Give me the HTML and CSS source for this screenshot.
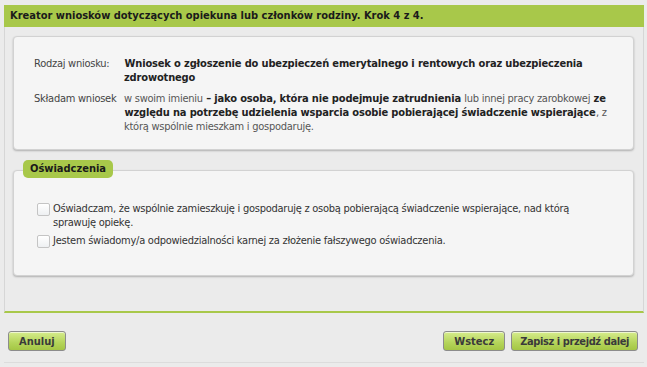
FILE: index.html
```html
<!DOCTYPE html>
<html>
<head>
  <meta charset="utf-8">
  <title>Kreator wniosków</title>
  <link rel="stylesheet" href="styles.css">
</head>
<body>
  <div class="wizard">
    <div class="wizard-header">Kreator wniosków dotyczących opiekuna lub członków rodziny. Krok 4 z 4.</div>

    <div class="wizard-body">
      <div class="card summary">
        <div class="summary-label">Rodzaj wniosku:</div>
        <div class="summary-value"><b>Wniosek o zgłoszenie do ubezpieczeń emerytalnego i rentowych oraz ubezpieczenia zdrowotnego</b></div>

        <div class="summary-label">Składam wniosek</div>
        <div class="summary-value">w swoim imieniu <b>– jako osoba, która nie podejmuje zatrudnienia</b> lub innej pracy zarobkowej <b>ze</b> <b>względu na potrzebę udzielenia wsparcia osobie pobierającej świadczenie wspierające</b>, z <span>którą wspólnie mieszkam i gospodaruję.</span></div>
      </div>

      <div class="section">
        <div class="section-title">Oświadczenia</div>
        <div class="card statements">
          <label class="check-row">
            <input type="checkbox">
            <span>Oświadczam, że wspólnie zamieszkuję i gospodaruję z osobą pobierającą świadczenie wspierające, nad którą sprawuję opiekę.</span>
          </label>
          <label class="check-row">
            <input type="checkbox">
            <span>Jestem świadomy/a odpowiedzialności karnej za złożenie fałszywego oświadczenia.</span>
          </label>
        </div>
      </div>
    </div>

    <div class="wizard-buttons">
      <button class="btn">Anuluj</button>
      <div class="btn-group">
        <button class="btn">Wstecz</button>
        <button class="btn btn-wide">Zapisz i przejdź dalej</button>
      </div>
    </div>
  </div>
</body>
</html>
```

FILE: styles.css
```css
body {
  margin: 0;
  background-color: #ebebeb;
  font-family: Tahoma, "DejaVu Sans Condensed", "DejaVu Sans", sans-serif;
  font-size: 11px;
  letter-spacing: -0.25px;
  color: #3a3a3a;
}

.wizard {
  margin: 5px 3px 0 4px;
  border-bottom: 1px solid #dcdcdc;
  height: 358px;
  box-sizing: border-box;
}

.wizard-header {
  height: 22px;
  line-height: 22px;
  padding-left: 6px;
  background-color: #a8c84a;
  color: #1a1a1a;
  font-weight: bold;
  font-size: 11px;
  letter-spacing: 0;
}

.wizard-body {
  border-left: 1px solid #d6d6d6;
  border-right: 1px solid #d6d6d6;
  border-bottom: 2px solid #a8c84a;
  padding: 9px 9px 35px 8px;
}

.card {
  background-color: #f5f5f5;
  border: 1px solid #d2d2d2;
  border-radius: 4px;
  box-shadow: 0 1px 2px rgba(0, 0, 0, 0.25);
}

/* Summary */
.summary {
  display: grid;
  grid-template-columns: 90px 1fr;
  row-gap: 7px;
  padding: 20px 22px 22px 20px;
  line-height: 14px;
  height: 114px;
  box-sizing: border-box;
  align-content: start;
}

.summary-label {
  color: #444;
}

.summary-value {
  color: #555;
}

.summary-value b {
  color: #222;
  letter-spacing: -0.15px;
  margin: 0 0.5px;
}

/* Statements */
.section {
  margin-top: 10px;
}

.section-title {
  position: relative;
  z-index: 1;
  width: fit-content;
  margin-left: 10px;
  margin-bottom: -8px;
  height: 18px;
  line-height: 18px;
  padding: 0 7px;
  background-color: #a8c84a;
  border-radius: 5px;
  font-weight: bold;
  font-size: 11px;
  letter-spacing: 0;
  color: #1a1a1a;
}

.statements {
  display: flex;
  flex-direction: column;
  gap: 4px;
  padding: 31px 40px 28px 23px;
  height: 106px;
  box-sizing: border-box;
  line-height: 14px;
}

.check-row {
  display: flex;
  align-items: flex-start;
  gap: 3px;
  color: #333;
}

.check-row input {
  appearance: none;
  flex: none;
  width: 13px;
  height: 13px;
  margin: 1px 0 0 0;
  border: 1px solid #c4c4c4;
  border-radius: 2px;
  background: linear-gradient(#ffffff, #eef0f2);
}

/* Buttons */
.wizard-buttons {
  display: flex;
  justify-content: space-between;
  align-items: center;
  padding: 18px 6px 0 4px;
}

.btn-group {
  display: flex;
  gap: 6px;
}

.btn {
  height: 20px;
  padding: 0 10px;
  border: 1px solid #8c8c8c;
  border-radius: 3px;
  background: linear-gradient(#d6ec8c, #b4d45a 60%, #a4c644);
  box-shadow: inset 0 1px 0 rgba(255, 255, 255, 0.6);
  font-family: inherit;
  font-size: 11px;
  font-weight: bold;
  letter-spacing: 0;
  color: #3a3a3a;
}

.btn-wide {
  padding: 0 8px;
  letter-spacing: -0.4px;
}
```
